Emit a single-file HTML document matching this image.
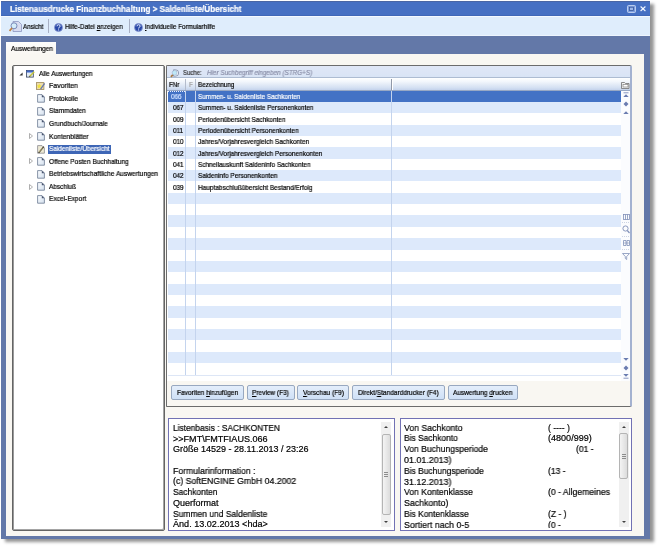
<!DOCTYPE html>
<html><head><meta charset="utf-8">
<style>
*{margin:0;padding:0;box-sizing:border-box}
html,body{width:658px;height:548px;overflow:hidden;background:#fff}
body{position:relative;font-family:"Liberation Sans",sans-serif;color:#000}
#root{position:absolute;left:0;top:0;width:658px;height:548px;filter:blur(0.3px)}
.a{position:absolute}
.t{position:absolute;white-space:pre;line-height:1;transform-origin:0 0;will-change:transform;-webkit-text-stroke:0.2px currentColor}
#win{left:1px;top:1px;width:649px;height:538px;background:#6378a8;box-shadow:4px 3px 3px rgba(0,0,0,.42)}
#title{left:1px;top:1px;width:649px;height:15px;background:#4670c3}
#tb{left:1px;top:16px;width:649px;height:20px;background:#dfedfc}
#content{left:6px;top:54px;width:638px;height:482px;background:#f9f7f2}
#tab{left:6px;top:42px;width:50px;height:12.5px;background:linear-gradient(#fdfdfc,#f9f7f2)}
#tree{left:12px;top:65px;width:153px;height:466px;background:#fff;border:1px solid #646464;box-shadow:inset -1px -1px 0 #a4a4a4,inset 1px 0 0 #9a9a9a;border-radius:2px}
#grid{left:166px;top:65px;width:465.5px;height:341.5px;background:#f9f7f2;border:1px solid #6c6c6c;border-right:2px solid #a4b2d0;border-radius:1.5px}
.info{top:417.5px;height:113.5px;background:#fff;border:1px solid #7272b4;overflow:hidden}
.btn{position:absolute;top:385px;height:14.5px;border:1px solid #98a8c0;border-radius:2px;background:linear-gradient(#e4eefb,#cfe0f6)}
u{text-decoration:underline}
</style></head><body><div id="root">
<div class="a" id="win"></div>
<div class="a" id="title"></div>
<div class="a" style="left:1px;top:1px;width:649px;height:1px;background:#4a66a4"></div>
<div class="a" style="left:1px;top:15px;width:649px;height:1px;background:#4068b8"></div>
<div class="a" id="tb"></div>
<div class="a" style="left:1px;top:16px;width:649px;height:1px;background:#f4f9ff"></div>
<div class="a" style="left:1px;top:35px;width:649px;height:1px;background:#eef5fe"></div>
<div class="a" id="content"></div>
<div class="a" id="tab"></div>
<div class="t" style="left:10.00px;top:6px;font-size:8.20px;color:#fff;font-weight:bold;transform:scaleX(0.985)">Listenausdrucke Finanzbuchhaltung &gt; Saldenliste/Übersicht</div>
<svg class="a" style="left:627px;top:4.5px" width="9" height="8" viewBox="0 0 9 8"><rect x="0.5" y="0.5" width="8" height="7" rx="1" fill="#7e9ede" stroke="#c4d4f2" stroke-width="0.9"/><rect x="2.6" y="2.2" width="3.8" height="3.4" fill="#9cb6ea" stroke="#2c4a8c" stroke-width="0.7"/></svg>
<svg class="a" style="left:639.5px;top:6px" width="6" height="5.5" viewBox="0 0 6 5.5"><path d="M0.6 0.5L5.4 5M5.4 0.5L0.6 5" stroke="#f4f8ff" stroke-width="1.1"/></svg>
<svg class="a" style="left:9px;top:20.5px" width="13" height="11" viewBox="0 0 13 11"><path d="M4 0.5h5.5l3 3v7h-8.5z" fill="#d8dcf0" stroke="#8c96c0" stroke-width="0.8"/><circle cx="5" cy="4.8" r="3" fill="#d4ecfa" stroke="#7a8ab8" stroke-width="1"/><path d="M3 7L0.5 10" stroke="#c08040" stroke-width="1.8"/></svg>
<div class="t" style="left:23.30px;top:23px;font-size:7.00px;transform:scaleX(0.888)">Ansicht</div>
<div class="a" style="left:48px;top:19px;width:1px;height:14px;background:#a8b0c4"></div>
<svg class="a" style="left:54px;top:22.5px" width="9" height="9" viewBox="0 0 9 9"><circle cx="4.5" cy="4.5" r="4" fill="#2848a8" stroke="#8898d0" stroke-width="0.8"/><path d="M3 3.3q0-1.6 1.6-1.6t1.5 1.5q0 1-1.4 1.5v0.8" fill="none" stroke="#e8f0ff" stroke-width="1"/><circle cx="4.6" cy="6.9" r="0.55" fill="#e8f0ff"/></svg>
<div class="t" style="left:64.80px;top:23px;font-size:7.00px;transform:scaleX(0.915)">Hilfe-Datei <u>a</u>nzeigen</div>
<div class="a" style="left:128.5px;top:19px;width:1px;height:14px;background:#a8b0c4"></div>
<svg class="a" style="left:134px;top:22.5px" width="9" height="9" viewBox="0 0 9 9"><circle cx="4.5" cy="4.5" r="4" fill="#2848a8" stroke="#8898d0" stroke-width="0.8"/><path d="M3 3.3q0-1.6 1.6-1.6t1.5 1.5q0 1-1.4 1.5v0.8" fill="none" stroke="#e8f0ff" stroke-width="1"/><circle cx="4.6" cy="6.9" r="0.55" fill="#e8f0ff"/></svg>
<div class="t" style="left:144.80px;top:23px;font-size:7.00px;transform:scaleX(0.907)"><u>i</u>ndividuelle Formularhilfe</div>
<div class="t" style="left:10.90px;top:45px;font-size:7.00px;transform:scaleX(0.938)">Auswertungen</div>
<div class="a" id="tree"></div>
<svg class="a" style="left:18.5px;top:72.2px" width="4" height="4" viewBox="0 0 4 4"><path d="M3.6 0.4V3.6H0.4z" fill="#333"/></svg>
<svg class="a" style="left:26px;top:69.7px" width="9" height="8" viewBox="0 0 9 8"><rect x="0.5" y="0.5" width="6.8" height="6.6" fill="#e2ebf6" stroke="#34425e" stroke-width="0.8"/><rect x="0.5" y="0.5" width="6.8" height="2" fill="#3f66c4"/><path d="M3.6 6.6L8.2 1.8" stroke="#c4c43c" stroke-width="1.5"/><path d="M3.4 6.9L4.2 5.9" stroke="#404040" stroke-width="1"/></svg>
<div class="t" style="left:38.90px;top:70px;font-size:7.00px;transform:scaleX(0.923)">Alle Auswertungen</div>
<svg class="a" style="left:36px;top:82.3px" width="9" height="8" viewBox="0 0 9 8"><rect x="0.5" y="0.6" width="7.4" height="6.8" fill="#ecdcae" stroke="#9c8858" stroke-width="0.8"/><path d="M3.2 1.6L4 3.3L5.8 3.5L4.5 4.7L4.9 6.5L3.2 5.6L1.6 6.5L2 4.7L0.8 3.5L2.5 3.3Z" fill="#f2e23a"/><path d="M4.6 7.2L8.6 1.4" stroke="#6878a8" stroke-width="1.3"/></svg>
<div class="t" style="left:49.30px;top:82px;font-size:7.00px;transform:scaleX(0.987)">Favoriten</div>
<svg class="a" style="left:37.0px;top:94.4px" width="8" height="9" viewBox="0 0 8 9"><defs><linearGradient id="dg2" x1="0" y1="0" x2="1" y2="1"><stop offset="0" stop-color="#fbfdff"/><stop offset="1" stop-color="#d4e0ee"/></linearGradient></defs><path d="M0.6 0.6H5L7.4 3V8.2H0.6Z" fill="url(#dg2)" stroke="#6a7890" stroke-width="0.8"/><path d="M4.8 0.6V3.2H7.4Z" fill="#4a5670"/></svg>
<div class="t" style="left:49.30px;top:95px;font-size:7.00px;transform:scaleX(0.934)">Protokolle</div>
<svg class="a" style="left:37.0px;top:106.9px" width="8" height="9" viewBox="0 0 8 9"><defs><linearGradient id="dg3" x1="0" y1="0" x2="1" y2="1"><stop offset="0" stop-color="#fbfdff"/><stop offset="1" stop-color="#d4e0ee"/></linearGradient></defs><path d="M0.6 0.6H5L7.4 3V8.2H0.6Z" fill="url(#dg3)" stroke="#6a7890" stroke-width="0.8"/><path d="M4.8 0.6V3.2H7.4Z" fill="#4a5670"/></svg>
<div class="t" style="left:49.30px;top:107px;font-size:7.00px;transform:scaleX(0.927)">Stammdaten</div>
<svg class="a" style="left:37.0px;top:119.4px" width="8" height="9" viewBox="0 0 8 9"><defs><linearGradient id="dg4" x1="0" y1="0" x2="1" y2="1"><stop offset="0" stop-color="#fbfdff"/><stop offset="1" stop-color="#d4e0ee"/></linearGradient></defs><path d="M0.6 0.6H5L7.4 3V8.2H0.6Z" fill="url(#dg4)" stroke="#6a7890" stroke-width="0.8"/><path d="M4.8 0.6V3.2H7.4Z" fill="#4a5670"/></svg>
<div class="t" style="left:49.30px;top:120px;font-size:7.00px;transform:scaleX(0.928)">Grundbuch/Journale</div>
<svg class="a" style="left:28.5px;top:133.3px" width="4" height="6" viewBox="0 0 4 6"><path d="M0.5 0.5L3.5 3L0.5 5.5z" fill="none" stroke="#9a9a9a" stroke-width="0.8"/></svg>
<svg class="a" style="left:37.0px;top:131.9px" width="8" height="9" viewBox="0 0 8 9"><defs><linearGradient id="dg5" x1="0" y1="0" x2="1" y2="1"><stop offset="0" stop-color="#fbfdff"/><stop offset="1" stop-color="#d4e0ee"/></linearGradient></defs><path d="M0.6 0.6H5L7.4 3V8.2H0.6Z" fill="url(#dg5)" stroke="#6a7890" stroke-width="0.8"/><path d="M4.8 0.6V3.2H7.4Z" fill="#4a5670"/></svg>
<div class="t" style="left:49.30px;top:133px;font-size:7.00px;transform:scaleX(0.953)">Kontenblätter</div>
<svg class="a" style="left:37px;top:144.5px" width="8" height="9" viewBox="0 0 8 9"><path d="M0.6 0.6H5L7.4 3V8.2H0.6Z" fill="#eeead4" stroke="#8a8a90" stroke-width="0.8"/><path d="M1.6 7.8L6.8 1.6" stroke="#3c3428" stroke-width="1.3"/><path d="M2 7L5.6 2.8" stroke="#e8dc90" stroke-width="0.6"/></svg>
<div class="a" style="left:47.5px;top:144.5px;width:63px;height:9.5px;background:#3e66b6"></div>
<div class="t" style="left:49.30px;top:145px;font-size:7.00px;color:#fff;transform:scaleX(0.920)">Saldenliste/Übersicht</div>
<svg class="a" style="left:28.5px;top:158.4px" width="4" height="6" viewBox="0 0 4 6"><path d="M0.5 0.5L3.5 3L0.5 5.5z" fill="none" stroke="#9a9a9a" stroke-width="0.8"/></svg>
<svg class="a" style="left:37.0px;top:157.0px" width="8" height="9" viewBox="0 0 8 9"><defs><linearGradient id="dg7" x1="0" y1="0" x2="1" y2="1"><stop offset="0" stop-color="#fbfdff"/><stop offset="1" stop-color="#d4e0ee"/></linearGradient></defs><path d="M0.6 0.6H5L7.4 3V8.2H0.6Z" fill="url(#dg7)" stroke="#6a7890" stroke-width="0.8"/><path d="M4.8 0.6V3.2H7.4Z" fill="#4a5670"/></svg>
<div class="t" style="left:49.30px;top:158px;font-size:7.00px;transform:scaleX(0.933)">Offene Posten Buchhaltung</div>
<svg class="a" style="left:37.0px;top:169.5px" width="8" height="9" viewBox="0 0 8 9"><defs><linearGradient id="dg8" x1="0" y1="0" x2="1" y2="1"><stop offset="0" stop-color="#fbfdff"/><stop offset="1" stop-color="#d4e0ee"/></linearGradient></defs><path d="M0.6 0.6H5L7.4 3V8.2H0.6Z" fill="url(#dg8)" stroke="#6a7890" stroke-width="0.8"/><path d="M4.8 0.6V3.2H7.4Z" fill="#4a5670"/></svg>
<div class="t" style="left:49.30px;top:170px;font-size:7.00px;transform:scaleX(0.940)">Betriebswirtschaftliche Auswertungen</div>
<svg class="a" style="left:28.5px;top:183.5px" width="4" height="6" viewBox="0 0 4 6"><path d="M0.5 0.5L3.5 3L0.5 5.5z" fill="none" stroke="#9a9a9a" stroke-width="0.8"/></svg>
<svg class="a" style="left:37.0px;top:182.1px" width="8" height="9" viewBox="0 0 8 9"><defs><linearGradient id="dg9" x1="0" y1="0" x2="1" y2="1"><stop offset="0" stop-color="#fbfdff"/><stop offset="1" stop-color="#d4e0ee"/></linearGradient></defs><path d="M0.6 0.6H5L7.4 3V8.2H0.6Z" fill="url(#dg9)" stroke="#6a7890" stroke-width="0.8"/><path d="M4.8 0.6V3.2H7.4Z" fill="#4a5670"/></svg>
<div class="t" style="left:49.30px;top:183px;font-size:7.00px;transform:scaleX(0.922)">Abschluß</div>
<svg class="a" style="left:37.0px;top:194.6px" width="8" height="9" viewBox="0 0 8 9"><defs><linearGradient id="dg10" x1="0" y1="0" x2="1" y2="1"><stop offset="0" stop-color="#fbfdff"/><stop offset="1" stop-color="#d4e0ee"/></linearGradient></defs><path d="M0.6 0.6H5L7.4 3V8.2H0.6Z" fill="url(#dg10)" stroke="#6a7890" stroke-width="0.8"/><path d="M4.8 0.6V3.2H7.4Z" fill="#4a5670"/></svg>
<div class="t" style="left:49.30px;top:195px;font-size:7.00px;transform:scaleX(0.940)">Excel-Export</div>
<div class="a" id="grid"></div>
<div class="a" style="left:167px;top:66px;width:463px;height:11.5px;background:linear-gradient(#e0e7f7,#d9e4f5);border-bottom:1px solid #adbcd2"></div>
<svg class="a" style="left:169.5px;top:68.5px" width="9" height="9" viewBox="0 0 9 9"><path d="M3.5 0.8H5.5A3.2 3.2 0 0 1 5.5 7.2H3.5Z" fill="#f2f6fa" stroke="#7c8aa6" stroke-width="0.8"/><circle cx="4.6" cy="3.8" r="2.4" fill="#bfe8f6" stroke="#9aaccc" stroke-width="0.6"/><path d="M2.8 5.8L0.9 7.8" stroke="#a87840" stroke-width="1.7"/></svg>
<div class="t" style="left:182.90px;top:69px;font-size:7.00px;color:#333;transform:scaleX(0.863)">Suche:</div>
<div class="t" style="left:206.80px;top:69px;font-size:7.00px;color:#8a8fa8;font-style:italic;transform:scaleX(0.909)">Hier Suchbegriff eingeben (STRG+S)</div>
<div class="a" style="left:167px;top:77.5px;width:463px;height:13px;background:linear-gradient(#ffffff,#f2f6fc 30%,#d4e0f2 80%,#c4d3ec);border-bottom:1px solid #98a8c4"></div>
<div class="a" style="left:185px;top:78.5px;width:1px;height:11px;background:#b4bccc"></div>
<div class="a" style="left:194.6px;top:78.5px;width:1px;height:11px;background:#b4bccc"></div>
<div class="a" style="left:391px;top:78.5px;width:1px;height:11px;background:#9098a8"></div>
<div class="a" style="left:392px;top:78.5px;width:1px;height:11px;background:#fff"></div>
<div class="t" style="left:169.40px;top:81px;font-size:7.00px;transform:scaleX(0.891)">FNr</div>
<div class="t" style="left:188.60px;top:81px;font-size:7.00px;color:#a0a0a0;transform:scaleX(0.900)">F</div>
<div class="t" style="left:197.80px;top:81px;font-size:7.00px;transform:scaleX(0.900)">Bezeichnung</div>
<svg class="a" style="left:621px;top:80.5px" width="9" height="8" viewBox="0 0 9 8"><path d="M0.5 1.5h3l1 1h3.5v5h-7.5z" fill="#f4f4f4" stroke="#707070" stroke-width="0.8"/><rect x="2" y="3.5" width="5" height="2.5" fill="#fff" stroke="#707070" stroke-width="0.6"/></svg>
<div class="a" style="left:167px;top:90.50px;width:454px;height:290.50px;background:#fff"></div>
<div class="a" style="left:168px;top:90.50px;width:452.6px;height:11.36px;background:#4372c5"></div>
<div class="a" style="left:168px;top:101.86px;width:452.6px;height:11.36px;background:#dde9fb"></div>
<div class="a" style="left:168px;top:124.58px;width:452.6px;height:11.36px;background:#dde9fb"></div>
<div class="a" style="left:168px;top:147.30px;width:452.6px;height:11.36px;background:#dde9fb"></div>
<div class="a" style="left:168px;top:170.02px;width:452.6px;height:11.36px;background:#dde9fb"></div>
<div class="a" style="left:168px;top:192.74px;width:452.6px;height:11.36px;background:#dde9fb"></div>
<div class="a" style="left:168px;top:215.46px;width:452.6px;height:11.36px;background:#dde9fb"></div>
<div class="a" style="left:168px;top:238.18px;width:452.6px;height:11.36px;background:#dde9fb"></div>
<div class="a" style="left:168px;top:260.90px;width:452.6px;height:11.36px;background:#dde9fb"></div>
<div class="a" style="left:168px;top:283.62px;width:452.6px;height:11.36px;background:#dde9fb"></div>
<div class="a" style="left:168px;top:306.34px;width:452.6px;height:11.36px;background:#dde9fb"></div>
<div class="a" style="left:168px;top:329.06px;width:452.6px;height:11.36px;background:#dde9fb"></div>
<div class="a" style="left:168px;top:351.78px;width:452.6px;height:11.36px;background:#dde9fb"></div>
<div class="a" style="left:185.2px;top:90.50px;width:0.8px;height:284.50px;background:#c4d4ee"></div>
<div class="a" style="left:194.9px;top:90.50px;width:0.8px;height:284.50px;background:#c4d4ee"></div>
<div class="a" style="left:391.2px;top:90.50px;width:0.8px;height:284.50px;background:#c4d4ee"></div>
<div class="a" style="left:168px;top:374.6px;width:452.6px;height:0.8px;background:#dde6f6"></div>
<div class="a" style="left:168px;top:90.70px;width:17px;height:1px;border-top:1px dotted #e8eeff"></div>
<div class="t" style="left:170.50px;top:93px;font-size:7.00px;color:#cfe0ff;transform:scaleX(0.900)">066</div>
<div class="t" style="left:198.30px;top:93px;font-size:7.00px;color:#fff;transform:scaleX(0.903)">Summen- u. Saldenliste Sachkonten</div>
<div class="t" style="left:172.70px;top:104px;font-size:7.00px;transform:scaleX(0.900)">067</div>
<div class="t" style="left:198.30px;top:104px;font-size:7.00px;transform:scaleX(0.907)">Summen- u. Saldenliste Personenkonten</div>
<div class="t" style="left:172.70px;top:116px;font-size:7.00px;transform:scaleX(0.900)">009</div>
<div class="t" style="left:198.30px;top:116px;font-size:7.00px;transform:scaleX(0.918)">Periodenübersicht Sachkonten</div>
<div class="t" style="left:172.70px;top:127px;font-size:7.00px;transform:scaleX(0.900)">011</div>
<div class="t" style="left:198.30px;top:127px;font-size:7.00px;transform:scaleX(0.921)">Periodenübersicht Personenkonten</div>
<div class="t" style="left:172.70px;top:138px;font-size:7.00px;transform:scaleX(0.900)">010</div>
<div class="t" style="left:198.30px;top:138px;font-size:7.00px;transform:scaleX(0.931)">Jahres/Vorjahresvergleich Sachkonten</div>
<div class="t" style="left:172.70px;top:150px;font-size:7.00px;transform:scaleX(0.900)">012</div>
<div class="t" style="left:198.30px;top:150px;font-size:7.00px;transform:scaleX(0.931)">Jahres/Vorjahresvergleich Personenkonten</div>
<div class="t" style="left:172.70px;top:161px;font-size:7.00px;transform:scaleX(0.900)">041</div>
<div class="t" style="left:198.30px;top:161px;font-size:7.00px;transform:scaleX(0.913)">Schnellauskunft Saldeninfo Sachkonten</div>
<div class="t" style="left:172.70px;top:172px;font-size:7.00px;transform:scaleX(0.900)">042</div>
<div class="t" style="left:198.30px;top:172px;font-size:7.00px;transform:scaleX(0.924)">Saldeninfo Personenkonten</div>
<div class="t" style="left:172.70px;top:184px;font-size:7.00px;transform:scaleX(0.900)">039</div>
<div class="t" style="left:198.30px;top:184px;font-size:7.00px;transform:scaleX(0.928)">Hauptabschlußübersicht Bestand/Erfolg</div>
<div class="a" style="left:620.6px;top:90.5px;width:9.4px;height:290.5px;background:#fbfcfe"></div>
<svg class="a" style="left:623.0px;top:92.0px" width="6" height="6" viewBox="0 0 6 6"><path d="M0.5 0.8h5" stroke="#8896c0" stroke-width="1"/><path d="M0.3 5L3 2.3L5.7 5z" fill="#6a7cb0"/></svg>
<svg class="a" style="left:623px;top:101px" width="6" height="6" viewBox="0 0 6 6"><path d="M3 0.5L5.5 3L3 5.5L0.5 3z" fill="#6a7cb0"/></svg>
<svg class="a" style="left:623.0px;top:108.5px" width="6" height="6" viewBox="0 0 6 6"><path d="M0.3 5L3 2.3L5.7 5z" fill="#6a7cb0"/></svg>
<svg class="a" style="left:622.5px;top:213.5px" width="7" height="6" viewBox="0 0 7 6"><rect x="0.5" y="0.5" width="6" height="5" fill="none" stroke="#8090b8" stroke-width="0.8"/><path d="M2.5 0.5v5M4.5 0.5v5" stroke="#8090b8" stroke-width="0.8"/></svg>
<div class="a" style="left:622px;top:222px;width:7px;height:0.8px;border-top:1px dotted #ccd4e4"></div>
<svg class="a" style="left:622px;top:225px" width="8" height="9" viewBox="0 0 8 9"><circle cx="3.5" cy="3.5" r="2.6" fill="none" stroke="#8090b8" stroke-width="0.9"/><path d="M5.3 5.5L7.5 8" stroke="#8090b8" stroke-width="1.2"/></svg>
<div class="a" style="left:622px;top:236px;width:7px;height:0.8px;border-top:1px dotted #ccd4e4"></div>
<svg class="a" style="left:622.5px;top:239.5px" width="7" height="6" viewBox="0 0 7 6"><path d="M0.5 0.5h2.5v5h-2.5zM4 0.5h2.5v5h-2.5z" fill="none" stroke="#8090b8" stroke-width="0.8"/><path d="M0.5 3h6" stroke="#8090b8" stroke-width="0.6"/></svg>
<div class="a" style="left:622px;top:249px;width:7px;height:0.8px;border-top:1px dotted #ccd4e4"></div>
<svg class="a" style="left:622px;top:252.5px" width="8" height="7" viewBox="0 0 8 7"><path d="M0.5 0.5h7l-2.8 3v3l-1.4-1v-2z" fill="none" stroke="#8090b8" stroke-width="0.8"/></svg>
<svg class="a" style="left:623.0px;top:356.5px" width="6" height="6" viewBox="0 0 6 6"><path d="M0.3 1L3 3.7L5.7 1z" fill="#6a7cb0"/></svg>
<svg class="a" style="left:623px;top:364.7px" width="6" height="6" viewBox="0 0 6 6"><path d="M3 0.5L5.5 3L3 5.5L0.5 3z" fill="#6a7cb0"/></svg>
<svg class="a" style="left:623.0px;top:373.0px" width="6" height="6" viewBox="0 0 6 6"><path d="M0.3 1L3 3.7L5.7 1z" fill="#6a7cb0"/><path d="M0.5 5.2h5" stroke="#8896c0" stroke-width="1"/></svg>
<div class="btn" style="left:170.9px;width:72.8px"></div>
<div class="t" style="left:176.70px;top:389px;font-size:7.00px;transform:scaleX(0.936)">Favoriten <u>h</u>inzufügen</div>
<div class="btn" style="left:246.5px;width:48.0px"></div>
<div class="t" style="left:252.30px;top:389px;font-size:7.00px;transform:scaleX(0.930)"><u>P</u>review (F3)</div>
<div class="btn" style="left:297.4px;width:51.9px"></div>
<div class="t" style="left:303.20px;top:389px;font-size:7.00px;transform:scaleX(0.930)"><u>V</u>orschau (F9)</div>
<div class="btn" style="left:352.2px;width:92.4px"></div>
<div class="t" style="left:358.00px;top:389px;font-size:7.00px;transform:scaleX(0.930)">Direkt/<u>S</u>tandarddrucker (F4)</div>
<div class="btn" style="left:447.5px;width:70.8px"></div>
<div class="t" style="left:453.30px;top:389px;font-size:7.00px;transform:scaleX(0.930)">Auswertung <u>d</u>rucken</div>
<div class="a info" style="left:168px;width:226.5px"></div>
<div class="a info" style="left:400px;width:231.5px"></div>
<div class="a" style="left:169px;top:418px;width:212px;height:109.5px;overflow:hidden">
<div class="t" style="left:3.90px;top:6px;font-size:9.00px;transform:scaleX(0.930)">Listenbasis : SACHKONTEN</div>
<div class="t" style="left:3.90px;top:17px;font-size:9.00px;transform:scaleX(1.006)">&gt;&gt;FMT\FMTFIAUS.066</div>
<div class="t" style="left:3.90px;top:27px;font-size:9.00px">Größe 14529 - 28.11.2013 / 23:26</div>
<div class="t" style="left:3.90px;top:49px;font-size:9.00px;transform:scaleX(0.965)">Formularinformation :</div>
<div class="t" style="left:3.90px;top:59px;font-size:9.00px;transform:scaleX(0.970)">(c) SoftENGINE GmbH 04.2002</div>
<div class="t" style="left:3.90px;top:70px;font-size:9.00px;transform:scaleX(0.936)">Sachkonten</div>
<div class="t" style="left:3.90px;top:81px;font-size:9.00px">Querformat</div>
<div class="t" style="left:3.90px;top:92px;font-size:9.00px;transform:scaleX(0.943)">Summen und Saldenliste</div>
<div class="t" style="left:3.90px;top:102px;font-size:9.00px;transform:scaleX(1.008)">Änd. 13.02.2013 &lt;hda&gt;</div>
</div>
<div class="a" style="left:401px;top:418px;width:217px;height:109.5px;overflow:hidden">
<div class="t" style="left:2.60px;top:6px;font-size:9.00px;transform:scaleX(0.968)">Von Sachkonto</div>
<div class="t" style="left:146.70px;top:6px;font-size:9.00px;transform:scaleX(0.950)">( ---- )</div>
<div class="t" style="left:2.60px;top:16px;font-size:9.00px;transform:scaleX(0.935)">Bis Sachkonto</div>
<div class="t" style="left:146.70px;top:16px;font-size:9.00px;transform:scaleX(1.006)">(4800/999)</div>
<div class="t" style="left:2.60px;top:27px;font-size:9.00px;transform:scaleX(0.953)">Von Buchungsperiode</div>
<div class="t" style="left:175.10px;top:27px;font-size:9.00px;transform:scaleX(0.950)">(01 -</div>
<div class="t" style="left:2.60px;top:38px;font-size:9.00px;transform:scaleX(0.989)">01.01.2013)</div>
<div class="t" style="left:2.60px;top:49px;font-size:9.00px;transform:scaleX(0.938)">Bis Buchungsperiode</div>
<div class="t" style="left:146.70px;top:49px;font-size:9.00px;transform:scaleX(0.950)">(13 -</div>
<div class="t" style="left:2.60px;top:60px;font-size:9.00px;transform:scaleX(0.989)">31.12.2013)</div>
<div class="t" style="left:2.60px;top:70px;font-size:9.00px;transform:scaleX(0.956)">Von Kontenklasse</div>
<div class="t" style="left:146.70px;top:70px;font-size:9.00px;transform:scaleX(0.961)">(0 - Allgemeines</div>
<div class="t" style="left:2.60px;top:81px;font-size:9.00px;transform:scaleX(0.975)">Sachkonto)</div>
<div class="t" style="left:2.60px;top:92px;font-size:9.00px;transform:scaleX(0.938)">Bis Kontenklasse</div>
<div class="t" style="left:146.70px;top:92px;font-size:9.00px;transform:scaleX(0.950)">(Z - )</div>
<div class="t" style="left:2.60px;top:103px;font-size:9.00px;transform:scaleX(0.980)">Sortiert nach 0-5</div>
<div class="t" style="left:146.70px;top:103px;font-size:9.00px;transform:scaleX(0.950)">(0 -</div>
</div>
<div class="a" style="left:381.0px;top:421.5px;width:10px;height:105.0px;background:#f0f0f0"></div><svg class="a" style="left:381.0px;top:424.0px" width="10" height="6" viewBox="0 0 10 6"><path d="M3 4L5 2L7 4z" fill="#404040"/></svg><svg class="a" style="left:381.0px;top:519.0px" width="10" height="6" viewBox="0 0 10 6"><path d="M3 2L5 4L7 2z" fill="#404040"/></svg><div class="a" style="left:381.5px;top:433.5px;width:9px;height:81.0px;border:1px solid #b4b4b4;border-radius:2px;background:linear-gradient(90deg,#f4f4f4,#dcdcdc)"></div><div class="a" style="left:384.0px;top:472.0px;width:4px;height:1px;background:#8c8c8c"></div><div class="a" style="left:384.0px;top:474.0px;width:4px;height:1px;background:#8c8c8c"></div><div class="a" style="left:384.0px;top:476.0px;width:4px;height:1px;background:#8c8c8c"></div>
<div class="a" style="left:618.8px;top:421.5px;width:10px;height:105.0px;background:#f0f0f0"></div><svg class="a" style="left:618.8px;top:424.0px" width="10" height="6" viewBox="0 0 10 6"><path d="M3 4L5 2L7 4z" fill="#404040"/></svg><svg class="a" style="left:618.8px;top:519.0px" width="10" height="6" viewBox="0 0 10 6"><path d="M3 2L5 4L7 2z" fill="#404040"/></svg><div class="a" style="left:619.3px;top:433.2px;width:9px;height:45.6px;border:1px solid #b4b4b4;border-radius:2px;background:linear-gradient(90deg,#f4f4f4,#dcdcdc)"></div><div class="a" style="left:621.8px;top:454.0px;width:4px;height:1px;background:#8c8c8c"></div><div class="a" style="left:621.8px;top:456.0px;width:4px;height:1px;background:#8c8c8c"></div><div class="a" style="left:621.8px;top:458.0px;width:4px;height:1px;background:#8c8c8c"></div>
</div></body></html>
